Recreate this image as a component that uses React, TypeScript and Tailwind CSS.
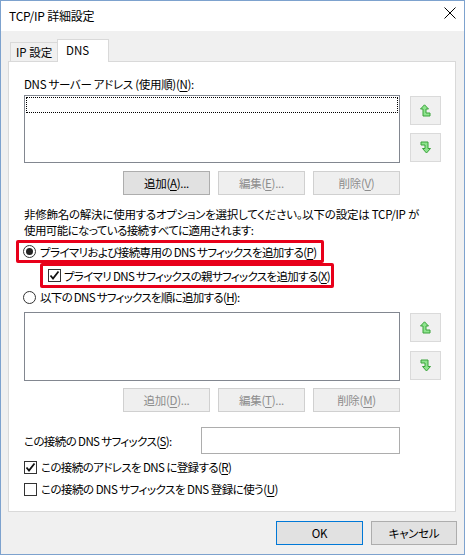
import React from 'react';

const font = "font-['Noto_Sans_CJK_JP','Noto_Sans',sans-serif] [font-feature-settings:'palt']";

const Key: React.FC<{ k: string }> = ({ k }) => <span className="underline underline-offset-2">{k}</span>;

const ArrowUp = () => (
  <svg width="11" height="13" viewBox="0 0 11 13">
    <polygon
      points="4.5,0.8 8.5,5 6,5 6,9 10,9 10,12 3,12 3,5 0.5,5"
      fill="#8ee48e"
      stroke="#3aa23a"
      strokeWidth="1"
      strokeLinejoin="miter"
    />
  </svg>
);

const ArrowDown = () => (
  <svg width="11" height="13" viewBox="0 0 11 13">
    <polygon
      points="1,1 8,1 8,7.5 10.5,7.5 6.5,12 2.5,7.5 5,7.5 5,4 1,4"
      fill="#8ee48e"
      stroke="#3aa23a"
      strokeWidth="1"
    />
  </svg>
);

const MoveButtons: React.FC<{ gap: string }> = ({ gap }) => (
  <div className="ml-[10px] flex flex-col">
    <div className="mt-[1px] w-[31px] h-[29px] bg-[#f0f0f0] border border-[#dadada] flex items-center justify-center">
      <ArrowUp />
    </div>
    <div className={`${gap} w-[31px] h-[29px] bg-[#f0f0f0] border border-[#dadada] flex items-center justify-center`}>
      <ArrowDown />
    </div>
  </div>
);

const Btn: React.FC<{ children: React.ReactNode; disabled?: boolean; w?: string; primary?: boolean }> = ({
  children,
  disabled,
  w = 'w-[87px]',
  primary,
}) => (
  <div
    className={`${w} h-[24px] flex items-center justify-center border tracking-[-0.3px] ${
      disabled
        ? 'bg-[#efefef] border-[#d0d0d0] text-[#8d8d8d]'
        : primary
        ? 'bg-[#e1e1e1] border-[#0078d7] text-black'
        : 'bg-[#e1e1e1] border-[#adadad] text-black'
    }`}
  >
    {children}
  </div>
);

const Radio: React.FC<{ checked?: boolean }> = ({ checked }) => (
  <div className="w-[13px] h-[13px] rounded-full border border-[#333] bg-white flex items-center justify-center shrink-0">
    {checked && <div className="w-[7px] h-[7px] rounded-full bg-[#222]" />}
  </div>
);

const Check: React.FC<{ checked?: boolean }> = ({ checked }) => (
  <div className="w-[13px] h-[13px] border border-[#333] bg-white flex items-center justify-center shrink-0">
    {checked && (
      <svg width="11" height="11" viewBox="0 0 11 11">
        <path d="M1.5 5.5 L4 8.5 L9.5 1.5" fill="none" stroke="#111" strokeWidth="1.8" />
      </svg>
    )}
  </div>
);

export default function App() {
  return (
    <div className={`${font} text-[11.5px] leading-[16px] text-black w-[465px] h-[555px] border border-[#7da2ce] bg-[#f0f0f0] flex flex-col`}>
      {/* title bar */}
      <div className="h-[30px] bg-white flex items-center justify-between pl-[8px] pr-[8px] shrink-0">
        <span className="text-[12px] tracking-[-0.2px]">TCP/IP 詳細設定</span>
        <svg width="12" height="12" viewBox="0 0 12 12" className="-mt-[6px]">
          <path d="M0.5 0.5 L11.5 11.5 M11.5 0.5 L0.5 11.5" stroke="#000" strokeWidth="1" />
        </svg>
      </div>

      <div className="flex-1 px-[7px] pt-[8px]">
        {/* tabs */}
        <div className="h-[22px] flex items-end pl-[2px]">
          <div className="w-[48px] h-[19px] border border-b-0 border-[#d9d9d9] bg-[#f0f0f0] flex items-center pl-[5px]">
            IP 設定
          </div>
          <div className="relative z-10 -ml-px -mb-px w-[52px] h-[23px] border border-b-0 border-[#d9d9d9] bg-white pl-[8px] pt-[2px]">
            DNS
          </div>
        </div>

        {/* panel */}
        <div className="w-[448px] h-[451px] border border-[#d9d9d9] bg-white pl-[15px] pt-[14px]">
          <div className="tracking-[-0.3px]">
            DNS サーバー アドレス (使用順)(<Key k="N" />):
          </div>

          <div className="mt-[3px] flex">
            <div className="w-[376px] h-[68px] border border-[#828790] bg-white p-px">
              <div className="h-[16px] border border-dotted border-black" />
            </div>
            <MoveButtons gap="mt-[8px]" />
          </div>

          <div className="mt-[8px] ml-[99px] flex gap-[8px]">
            <Btn>
              追加(<Key k="A" />)...
            </Btn>
            <Btn disabled>
              編集(<Key k="E" />)...
            </Btn>
            <Btn disabled>
              削除(<Key k="V" />)
            </Btn>
          </div>

          <div className="mt-[11px] whitespace-nowrap">
            <div className="tracking-[-0.25px]">非修飾名の解決に使用するオプションを選択してください。以下の設定は TCP/IP が</div>
            <div className="tracking-[-0.6px]">使用可能になっている接続すべてに適用されます:</div>
          </div>

          <div className="mt-[2px] -ml-[8px] w-[308px] h-[23px] border-[3px] border-[#e8001a] rounded-[2px] flex items-center pl-[4px] gap-[4px] whitespace-nowrap">
            <Radio checked />
            <span className="tracking-[-0.6px]">
              プライマリおよび接続専用の DNS サフィックスを追加する(<Key k="P" />)
            </span>
          </div>

          <div className="ml-[16px] w-[294px] h-[25px] border-[3px] border-[#e8001a] rounded-[2px] flex items-center pl-[5px] gap-[3px] whitespace-nowrap">
            <Check checked />
            <span className="tracking-[-0.65px]">
              プライマリ DNS サフィックスの親サフィックスを追加する(<Key k="X" />)
            </span>
          </div>

          <div className="mt-[1px] -ml-px h-[16px] flex items-center gap-[4px] whitespace-nowrap">
            <Radio />
            <span className="tracking-[-0.7px]">
              以下の DNS サフィックスを順に追加する(<Key k="H" />):
            </span>
          </div>

          <div className="mt-[7px] flex">
            <div className="w-[376px] h-[69px] border border-[#828790] bg-white" />
            <MoveButtons gap="mt-[9px]" />
          </div>

          <div className="mt-[7px] ml-[99px] flex gap-[8px]">
            <Btn disabled>
              追加(<Key k="D" />)...
            </Btn>
            <Btn disabled>
              編集(<Key k="T" />)...
            </Btn>
            <Btn disabled>
              削除(<Key k="M" />)
            </Btn>
          </div>

          <div className="mt-[15px] flex items-center">
            <div className="w-[177px] whitespace-nowrap tracking-[-0.6px]">
              この接続の DNS サフィックス(<Key k="S" />):
            </div>
            <div className="w-[199px] h-[27px] border border-[#adadad] bg-white" />
          </div>

          <div className="mt-[5px] h-[16px] flex items-center gap-[4px] whitespace-nowrap">
            <Check checked />
            <span className="tracking-[-0.6px]">
              この接続のアドレスを DNS に登録する(<Key k="R" />)
            </span>
          </div>

          <div className="mt-[6px] h-[16px] flex items-center gap-[4px] whitespace-nowrap">
            <Check />
            <span className="tracking-[-0.5px]">
              この接続の DNS サフィックスを DNS 登録に使う(<Key k="U" />)
            </span>
          </div>
        </div>

        {/* footer */}
        <div className="mt-[9px] ml-[268px] flex gap-[8px]">
          <Btn primary>OK</Btn>
          <Btn w="w-[86px]">キャンセル</Btn>
        </div>
      </div>
    </div>
  );
}
